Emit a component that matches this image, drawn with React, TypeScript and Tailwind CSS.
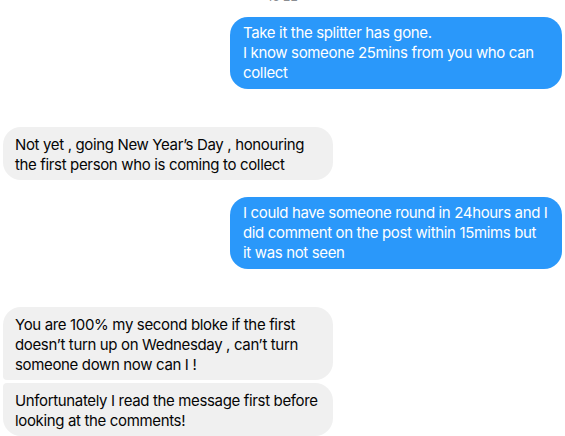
import React from "react";

function Blue({ lines, className = "" }: { lines: string[]; className?: string }) {
  return (
    <div className={`self-end mr-[3px] w-[332px] rounded-[18px] bg-[#2a98fa] text-white pl-[13px] pt-[6px] pb-[6px] ${className}`}>
      {lines.map((l, i) => (
        <div key={i} className="whitespace-nowrap">{l}</div>
      ))}
    </div>
  );
}

function Gray({ lines, className = "" }: { lines: string[]; className?: string }) {
  return (
    <div className={`self-start ml-[3px] w-[330px] bg-[#f0f0f0] text-[#050505] pl-[12px] pt-[8px] pb-[5px] ${className}`}>
      {lines.map((l, i) => (
        <div key={i} className="whitespace-nowrap">{l}</div>
      ))}
    </div>
  );
}

export default function App() {
  return (
    <div className="w-[565px] h-[436px] overflow-hidden bg-white flex flex-col font-['Inter',sans-serif] text-[15px] leading-[20px] tracking-[-0.35px]">
      <div className="-mt-[10px] h-[14px] text-[12px] leading-[14px] tracking-normal text-center text-[#8a8d91]">16:22</div>
      <Blue
        className="mt-[13px]"
        lines={["Take it the splitter has gone.", "I know someone 25mins from you who can", "collect"]}
      />
      <Gray
        className="mt-[38px] rounded-[18px]"
        lines={["Not yet , going New Year\u2019s Day , honouring", "the first person who is coming to collect"]}
      />
      <Blue
        className="mt-[17px]"
        lines={["I could have someone round in 24hours and I", "did comment on the post within 15mims but", "it was not seen"]}
      />
      <Gray
        className="mt-[38px] rounded-[18px] rounded-bl-[4px]"
        lines={["You are 100% my second bloke if the first", "doesn\u2019t turn up on Wednesday , can\u2019t turn", "someone down now can I !"]}
      />
      <Gray
        className="mt-[3px] rounded-[18px] rounded-tl-[4px]"
        lines={["Unfortunately I read the message first before", "looking at the comments!"]}
      />
    </div>
  );
}
